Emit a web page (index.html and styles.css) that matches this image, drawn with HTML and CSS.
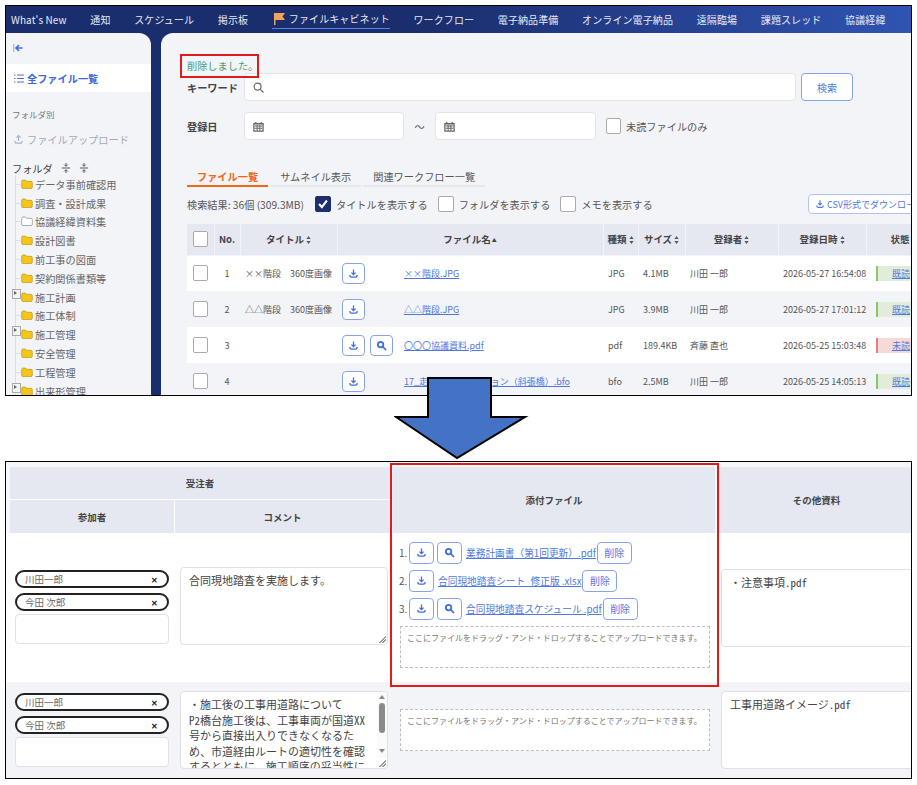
FILE: index.html
```html
<!DOCTYPE html>
<html lang="ja">
<head>
    <meta charset="UTF-8">
    <meta name="viewport" content="width=device-width, initial-scale=1.0">
    <title>ファイルキャビネット</title>
    <link rel="stylesheet" href="styles.css">
</head>
<body>
    <!-- shared icons -->
    <svg class="icon-defs" aria-hidden="true">
        <symbol id="i-download" viewBox="0 0 24 24">
            <path d="M12 3v11M7.500 10l4.500 4.500 4.500-4.500M4 15.500c0 3 1 4.500 3.500 4.500h9c2.500 0 3.500-1.500 3.500-4.500" fill="none" stroke="currentColor" stroke-width="2.800"/>
        </symbol>
        <symbol id="i-search" viewBox="0 0 24 24">
            <circle cx="10" cy="10" r="6" fill="none" stroke="currentColor" stroke-width="4"/>
            <path d="M15 15l6 6" stroke="currentColor" stroke-width="3.600" stroke-linecap="round"/>
        </symbol>
        <symbol id="i-folder" viewBox="0 0 12 11">
            <path d="M.7 2.500c0-1 .5-1.500 1.300-1.500h2.500l1.200 1.300h4.300c.8 0 1.300.5 1.300 1.300v4.600c0 .9-.5 1.300-1.300 1.300H2c-.8 0-1.300-.4-1.300-1.300z"/>
        </symbol>
        <symbol id="i-sort" viewBox="0 0 6 10">
            <path d="M3 0l2.600 3.800H.4zM3 10L.4 6.200h5.200z" fill="currentColor"/>
        </symbol>
        <symbol id="i-fold" viewBox="0 0 12 14">
            <path d="M1 7h10M6 1v3.500M4 3l2 2 2-2M6 13V9.500M4 11l2-2 2 2" fill="none" stroke="currentColor" stroke-width="1.200"/>
        </symbol>
    </svg>

    <section class="frame frame-top">
        <nav class="topnav">
            <a>What's New</a>
            <a>通知</a>
            <a>スケジュール</a>
            <a>掲示板</a>
            <a class="active">
                <svg class="flag" viewBox="0 0 11 12"><path d="M0 0h11L8.500 3.500 11 7H1.500v5H0z" fill="#f0a35c"/></svg>
                ファイルキャビネット
            </a>
            <a>ワークフロー</a>
            <a>電子納品準備</a>
            <a>オンライン電子納品</a>
            <a>遠隔臨場</a>
            <a>課題スレッド</a>
            <a>協議経緯</a>
        </nav>

        <div class="cabinet">
            <aside class="sidebar">
                <svg class="collapse" viewBox="0 0 10 10"><path d="M.8 1v8" stroke="#9aa3b5" stroke-width="1"/><path d="M9.500 5H4M6 2.200L3 5l3 2.800" fill="none" stroke="#3d6fe0" stroke-width="1.600"/></svg>
                <div class="all-files">
                    <svg class="list-icon" viewBox="0 0 10 9"><path d="M0 1h1.500M3 1h7M0 4.500h1.500M3 4.500h7M0 8h1.500M3 8h7" stroke="#4a6fc8" stroke-width="1"/></svg>
                    全ファイル一覧
                </div>
                <div class="side-caption">フォルダ別</div>
                <div class="upload">
                    <svg class="upload-icon" viewBox="0 0 24 24"><path d="M12 15V4M7.500 8L12 3.500 16.500 8M4 14.500c0 4 1 5.500 3.500 5.500h9c2.500 0 3.500-1.500 3.500-5.500" fill="none" stroke="#aab4c8" stroke-width="2.400"/></svg>
                    ファイルアップロード
                </div>
                <div class="folder-head">
                    フォルダ
                    <svg class="fold-icon"><use href="#i-fold"/></svg>
                    <svg class="fold-icon"><use href="#i-fold"/></svg>
                </div>
                <ul class="tree">
                    <li><span class="gutter"></span><svg class="folder"><use href="#i-folder"/></svg>データ事前確認用</li>
                    <li><span class="gutter"></span><svg class="folder"><use href="#i-folder"/></svg>調査・設計成果</li>
                    <li><span class="gutter"></span><svg class="folder empty"><use href="#i-folder"/></svg>協議経緯資料集</li>
                    <li><span class="gutter"></span><svg class="folder"><use href="#i-folder"/></svg>設計図書</li>
                    <li><span class="gutter"></span><svg class="folder"><use href="#i-folder"/></svg>前工事の図面</li>
                    <li><span class="gutter"></span><svg class="folder"><use href="#i-folder"/></svg>契約関係書類等</li>
                    <li><span class="gutter closed"></span><svg class="folder"><use href="#i-folder"/></svg>施工計画</li>
                    <li><span class="gutter"></span><svg class="folder"><use href="#i-folder"/></svg>施工体制</li>
                    <li><span class="gutter closed"></span><svg class="folder"><use href="#i-folder"/></svg>施工管理</li>
                    <li><span class="gutter"></span><svg class="folder"><use href="#i-folder"/></svg>安全管理</li>
                    <li><span class="gutter"></span><svg class="folder"><use href="#i-folder"/></svg>工程管理</li>
                    <li><span class="gutter closed"></span><svg class="folder"><use href="#i-folder"/></svg>出来形管理</li>
                </ul>
            </aside>

            <main class="content">
                <p class="message">削除しました。</p>
                <div class="form-row">
                    <label class="form-label">キーワード</label>
                    <div class="input keyword">
                        <svg class="field-icon" viewBox="0 0 12 12"><circle cx="5" cy="5" r="3.800" fill="none" stroke="#666" stroke-width="1.300"/><path d="M8 8l3.500 3.500" stroke="#666" stroke-width="1.300"/></svg>
                    </div>
                    <button class="btn search-btn">検索</button>
                </div>
                <div class="form-row date-row">
                    <label class="form-label">登録日</label>
                    <div class="input date">
                        <svg class="field-icon" viewBox="0 0 12 12"><path d="M1 3h10v8H1zM3 1v2M9 1v2" fill="none" stroke="#666" stroke-width="1.400"/><path d="M2 5.500h8M2 8h8M4.500 4v6.500M7.500 4v6.500" stroke="#666" stroke-width="1.100"/></svg>
                    </div>
                    <span class="tilde">～</span>
                    <div class="input date second">
                        <svg class="field-icon" viewBox="0 0 12 12"><path d="M1 3h10v8H1zM3 1v2M9 1v2" fill="none" stroke="#666" stroke-width="1.400"/><path d="M2 5.500h8M2 8h8M4.500 4v6.500M7.500 4v6.500" stroke="#666" stroke-width="1.100"/></svg>
                    </div>
                    <span class="check unread-check"></span>
                    <span class="check-text">未読ファイルのみ</span>
                </div>

                <div class="tabs">
                    <a class="tab current">ファイル一覧</a>
                    <a class="tab">サムネイル表示</a>
                    <a class="tab">関連ワークフロー一覧</a>
                </div>

                <div class="result-row">
                    <span class="result-count">検索結果: 36個 (309.3MB)</span>
                    <span class="check on"><svg viewBox="0 0 16 16"><path d="M3.500 8l3.200 3.500L12.500 4" fill="none" stroke="#fff" stroke-width="2.400"/></svg></span>
                    <span class="check-text">タイトルを表示する</span>
                    <span class="check"></span>
                    <span class="check-text">フォルダを表示する</span>
                    <span class="check"></span>
                    <span class="check-text">メモを表示する</span>
                    <button class="btn csv-btn"><svg class="btn-icon"><use href="#i-download"/></svg>CSV形式でダウンロード</button>
                </div>

                <table class="file-table">
                    <colgroup>
                        <col class="c-check"><col class="c-no"><col class="c-title"><col class="c-file"><col class="c-type"><col class="c-size"><col class="c-user"><col class="c-date"><col class="c-state">
                    </colgroup>
                    <thead>
                        <tr>
                            <th><span class="check"></span></th>
                            <th>No.</th>
                            <th>タイトル<svg class="sort"><use href="#i-sort"/></svg></th>
                            <th>ファイル名<span class="sort-up">▲</span></th>
                            <th>種類<svg class="sort"><use href="#i-sort"/></svg></th>
                            <th>サイズ<svg class="sort"><use href="#i-sort"/></svg></th>
                            <th>登録者<svg class="sort"><use href="#i-sort"/></svg></th>
                            <th>登録日時<svg class="sort"><use href="#i-sort"/></svg></th>
                            <th>状態</th>
                        </tr>
                    </thead>
                    <tbody>
                        <tr>
                            <td><span class="check"></span></td>
                            <td class="center">1</td>
                            <td>××階段　360度画像</td>
                            <td><div class="file-cell"><div class="file-btns"><button class="icon-btn"><svg><use href="#i-download"/></svg></button></div><a class="link">××階段.JPG</a></div></td>
                            <td>JPG</td>
                            <td>4.1MB</td>
                            <td>川田 一郎</td>
                            <td>2026-05-27 16:54:08</td>
                            <td><span class="state read">既読</span></td>
                        </tr>
                        <tr>
                            <td><span class="check"></span></td>
                            <td class="center">2</td>
                            <td>△△階段　360度画像</td>
                            <td><div class="file-cell"><div class="file-btns"><button class="icon-btn"><svg><use href="#i-download"/></svg></button></div><a class="link">△△階段.JPG</a></div></td>
                            <td>JPG</td>
                            <td>3.9MB</td>
                            <td>川田 一郎</td>
                            <td>2026-05-27 17:01:12</td>
                            <td><span class="state read">既読</span></td>
                        </tr>
                        <tr>
                            <td><span class="check"></span></td>
                            <td class="center">3</td>
                            <td></td>
                            <td><div class="file-cell"><div class="file-btns"><button class="icon-btn"><svg><use href="#i-download"/></svg></button><button class="icon-btn"><svg><use href="#i-search"/></svg></button></div><a class="link">〇〇〇協議資料.pdf</a></div></td>
                            <td>pdf</td>
                            <td>189.4KB</td>
                            <td>斉藤 直也</td>
                            <td>2026-05-25 15:03:48</td>
                            <td><span class="state unread">未読</span></td>
                        </tr>
                        <tr>
                            <td><span class="check"></span></td>
                            <td class="center">4</td>
                            <td></td>
                            <td><div class="file-cell"><div class="file-btns"><button class="icon-btn"><svg><use href="#i-download"/></svg></button></div><a class="link">17_走行シミュレーション（斜張橋）.bfo</a></div></td>
                            <td>bfo</td>
                            <td>2.5MB</td>
                            <td>川田 一郎</td>
                            <td>2026-05-25 14:05:13</td>
                            <td><span class="state read">既読</span></td>
                        </tr>
                    </tbody>
                </table>
                <div class="note-box"></div>
            </main>
        </div>
    </section>

    <svg class="arrow" viewBox="0 0 135 83"><path d="M34 1h63v39h34L63 81 2 40h32z" fill="#4472c4" stroke="#000" stroke-width="2"/></svg>

    <section class="frame frame-bottom">
        <table class="meeting-table">
            <colgroup>
                <col class="m-user"><col class="m-comment"><col class="m-files"><col class="m-other">
            </colgroup>
            <thead>
                <tr>
                    <th colspan="2" class="group">受注者</th>
                    <th rowspan="2" class="files-head">添付ファイル</th>
                    <th rowspan="2">その他資料</th>
                </tr>
                <tr>
                    <th class="group first">参加者</th>
                    <th class="group">コメント</th>
                </tr>
            </thead>
            <tbody>
                <tr class="row-one">
                    <td class="users-cell">
                        <div class="tag">川田一郎<span class="tag-x">✕</span></div>
                        <div class="tag">今田 次郎<span class="tag-x">✕</span></div>
                        <div class="user-input"></div>
                    </td>
                    <td class="comment-cell"><div class="memo">合同現地踏査を実施します。</div></td>
                    <td class="files-cell">
                        <div class="attach"><span class="num">1.</span><button class="icon-btn"><svg><use href="#i-download"/></svg></button><button class="icon-btn"><svg><use href="#i-search"/></svg></button><a class="link">業務計画書（第1回更新）.pdf</a><button class="btn del-btn">削除</button></div>
                        <div class="attach"><span class="num">2.</span><button class="icon-btn"><svg><use href="#i-download"/></svg></button><a class="link">合同現地踏査シート_修正版 .xlsx</a><button class="btn del-btn">削除</button></div>
                        <div class="attach"><span class="num">3.</span><button class="icon-btn"><svg><use href="#i-download"/></svg></button><button class="icon-btn"><svg><use href="#i-search"/></svg></button><a class="link">合同現地踏査スケジュール .pdf</a><button class="btn del-btn">削除</button></div>
                        <div class="dropzone">ここにファイルをドラッグ・アンド・ドロップすることでアップロードできます。</div>
                    </td>
                    <td class="other-cell"><div class="memo">・注意事項.pdf</div></td>
                </tr>
                <tr class="row-two">
                    <td class="users-cell">
                        <div class="tag">川田一郎<span class="tag-x">✕</span></div>
                        <div class="tag">今田 次郎<span class="tag-x">✕</span></div>
                        <div class="user-input"></div>
                    </td>
                    <td class="comment-cell">
                        <div class="memo scrolled">・施工後の工事用道路について<br>P2橋台施工後は、工事車両が国道XX<br>号から直接出入りできなくなるた<br>め、市道経由ルートの適切性を確認<br>するとともに、施工順序の妥当性に
                            <div class="scrollbar"><span class="sb-up"></span><span class="sb-thumb"></span><span class="sb-down"></span></div>
                        </div>
                    </td>
                    <td class="files-cell">
                        <div class="dropzone">ここにファイルをドラッグ・アンド・ドロップすることでアップロードできます。</div>
                    </td>
                    <td class="other-cell"><div class="memo">工事用道路イメージ.pdf</div></td>
                </tr>
            </tbody>
        </table>
        <div class="note-box files-box"></div>
    </section>
</body>
</html>
```

FILE: styles.css
```css
* {
    box-sizing: border-box;
}

body {
    margin: 0;
    height: 785px;
    overflow: hidden;
    position: relative;
    background: #fff;
    font-family: "Noto Sans CJK JP", "Noto Sans", sans-serif;
    font-size: 10.200px;
    color: #555;
}

.icon-defs {
    display: none;
}

.frame {
    position: relative;
    margin: 0 5px;
    width: 907px;
    border: 1px solid #000;
    overflow: hidden;
}

.frame-top {
    margin-top: 5px;
    height: 391px;
}

.frame-bottom {
    margin-top: 65px;
    height: 318px;
    padding-top: 5px;
    background: #f6f7fa;
}

/* top nav */
.topnav {
    display: flex;
    align-items: center;
    gap: 23.700px;
    height: 27px;
    padding-left: 5px;
    background: linear-gradient(90deg, #1a2d6c 0%, #1a2d6c 45%, #3054b2 100%);
}

.topnav a {
    color: #e6eaf5;
    font-size: 10px;
    letter-spacing: 0.1px;
    white-space: nowrap;
    line-height: 18px;
}

.topnav a.active {
    display: flex;
    align-items: center;
    gap: 4px;
    padding: 0 0 0 2px;
    border-bottom: 1px solid #4f7fe8;
}

.flag {
    width: 11px;
    height: 12px;
}

.cabinet {
    display: flex;
    gap: 10px;
    height: 362px;
    background: #1a2d6c;
}

/* sidebar */
.sidebar {
    width: 145px;
    flex: none;
    padding-top: 10px;
    background: #f2f4f8;
    border-top-right-radius: 12px;
    overflow: hidden;
}

.collapse {
    display: block;
    width: 10px;
    height: 10px;
    margin-left: 7px;
}

.all-files {
    display: flex;
    align-items: center;
    gap: 3px;
    height: 28px;
    margin-top: 11px;
    padding-left: 8px;
    background: #fff;
    color: #3f68d8;
    font-weight: 700;
}

.list-icon {
    width: 10px;
    height: 9px;
}

.side-caption {
    margin: 16px 0 0 6px;
    font-size: 8.500px;
    line-height: 12px;
    color: #777;
}

.upload {
    display: flex;
    align-items: center;
    gap: 3px;
    height: 16px;
    margin: 11px 0 0 6px;
    color: #a4a9b3;
}

.upload-icon {
    width: 11px;
    height: 11px;
    margin-left: 1px;
}

.folder-head {
    display: flex;
    align-items: center;
    height: 16px;
    margin: 13px 0 0 6px;
    color: #444;
}

.fold-icon {
    width: 10px;
    height: 12px;
    margin-left: 8px;
    color: #555;
}

.tree {
    list-style: none;
    margin: -1px 0 0;
    padding: 0 0 0 6px;
}

.tree li {
    display: flex;
    align-items: center;
    height: 18.800px;
    white-space: nowrap;
    color: #666;
}

.gutter {
    position: relative;
    width: 9px;
    height: 100%;
    background:
        linear-gradient(#dcdfe5, #dcdfe5) 3px 0 / 1px 100% no-repeat,
        linear-gradient(#dcdfe5, #dcdfe5) 3px 50% / 6px 1px no-repeat;
}

.gutter.closed::after {
    content: "";
    position: absolute;
    left: 0;
    top: 1px;
    width: 7px;
    height: 8px;
    border: 1px solid #aaa;
    background: #f2f4f8;
}

.gutter.closed::before {
    content: "";
    position: absolute;
    z-index: 1;
    left: 2px;
    top: 3px;
    border-left: 3px solid #666;
    border-top: 2px solid transparent;
    border-bottom: 2px solid transparent;
}

.folder {
    width: 12px;
    height: 11px;
    margin-right: 2px;
    fill: #f5c518;
    stroke: #b08d10;
    stroke-width: 0.6;
}

.folder.empty {
    fill: #fff;
    stroke: #777;
}

/* main area */
.content {
    flex: 1;
    min-width: 0;
    padding: 26px 0 0 26px;
    background: #f2f4f8;
    border-top-left-radius: 12px;
    overflow: hidden;
}

.message {
    margin: 0;
    line-height: 14px;
    color: #4a9b75;
}

.form-row {
    display: flex;
    align-items: center;
    height: 28px;
}

.date-row {
    margin-top: 11px;
}

.form-label {
    width: 57px;
    font-weight: 700;
    color: #444;
}

.input {
    display: flex;
    align-items: center;
    height: 28px;
    padding-left: 8px;
    background: #fff;
    border: 1px solid #e2e4e9;
    border-radius: 4px;
}

.keyword {
    width: 552px;
}

.date {
    width: 160px;
}

.date.second {
    width: 161px;
}

.field-icon {
    width: 11px;
    height: 11px;
}

.tilde {
    width: 31px;
    text-align: center;
}

.btn {
    padding: 0;
    background: #fff;
    border: 1px solid #86a4ee;
    border-radius: 4px;
    color: #4f78e0;
    font-family: inherit;
    font-size: 10px;
}

.search-btn {
    width: 52px;
    height: 28px;
    margin-left: 5px;
}

.check {
    display: inline-block;
    flex: none;
    width: 15px;
    height: 16px;
    background: #fff;
    border: 1px solid #aaa;
    border-radius: 2px;
    vertical-align: middle;
}

.check.on {
    background: #1c2f6e;
    border-color: #1c2f6e;
}

.check.on svg {
    display: block;
    width: 100%;
    height: 100%;
}

.unread-check {
    margin-left: 10px;
}

.check-text {
    margin-left: 5px;
    white-space: nowrap;
}

.tabs {
    display: flex;
    gap: 2px;
    margin-top: 29px;
}

.tab {
    padding: 0 10px;
    line-height: 16px;
    border-bottom: 2px solid #e8e9ec;
    white-space: nowrap;
}

.tab.current {
    color: #f0651a;
    font-weight: 700;
    border-bottom-color: #f0651a;
}

.result-row {
    display: flex;
    align-items: center;
    width: 741px;
    height: 20px;
    margin-top: 7px;
}

.result-count {
    margin-right: 6px;
}

.result-row .check {
    margin-left: 5px;
    width: 16px;
}

.result-row .check-text + .check {
    margin-left: 10px;
}

.csv-btn {
    display: flex;
    align-items: center;
    gap: 2px;
    flex: none;
    width: 120px;
    height: 20px;
    margin-left: auto;
    padding-left: 6px;
    font-size: 9px;
    white-space: nowrap;
    border-color: #b0c4f2;
}

.btn-icon {
    width: 10px;
    height: 10px;
}

/* file table */
.file-table {
    table-layout: fixed;
    width: 747px;
    margin-top: 10px;
    border-collapse: collapse;
    font-size: 9px;
}

.c-check { width: 27px; }
.c-no { width: 26px; }
.c-title { width: 97px; }
.c-file { width: 266px; }
.c-type { width: 35px; }
.c-size { width: 47px; }
.c-user { width: 93px; }
.c-date { width: 88px; }
.c-state { width: 68px; }

.file-table th {
    height: 31px;
    padding: 0;
    background: #e5e8f1;
    border-right: 1px solid #f2f4f8;
    border-bottom: 1px solid #f2f4f8;
    color: #444;
    font-size: 9.500px;
    font-weight: 700;
    text-align: center;
    white-space: nowrap;
}

.file-table td {
    height: 36px;
    padding: 0 0 0 5px;
    white-space: nowrap;
    overflow: hidden;
}

.file-table .center {
    padding: 0;
    text-align: center;
}

.file-table tbody tr:nth-child(odd) {
    background: #fff;
}

.file-table th:first-child .check,
.file-table td:first-child .check {
    margin-left: 1px;
}

.sort {
    width: 5px;
    height: 8px;
    margin-left: 2px;
    color: #555;
    vertical-align: -1px;
}

.sort-up {
    font-size: 5px;
    margin-left: 1px;
    vertical-align: 1px;
}

.file-cell {
    display: flex;
    align-items: center;
}

.file-btns {
    display: flex;
    gap: 5px;
    width: 62px;
}

.icon-btn {
    display: inline-flex;
    align-items: center;
    justify-content: center;
    flex: none;
    width: 23px;
    height: 21px;
    padding: 0;
    background: #fff;
    border: 1px solid #86a4ee;
    border-radius: 4px;
    color: #3f6fe0;
}

.icon-btn svg {
    width: 11px;
    height: 11px;
}

.link {
    color: #4f78e0;
    text-decoration: underline;
    white-space: nowrap;
}

.state {
    display: block;
    width: 48px;
    margin-left: 5px;
    line-height: 15px;
    text-align: center;
    color: #4f78e0;
    text-decoration: underline;
}

.state.read {
    background: #e1ecd9;
    border-left: 2px solid #8ac66a;
}

.state.unread {
    background: #f6d9d9;
    border-left: 2px solid #e58080;
}

/* red annotation boxes */
.note-box {
    position: absolute;
    left: 174px;
    top: 48px;
    width: 79px;
    height: 24px;
    border: 2px solid #e01b1b;
}

.note-box.files-box {
    left: 384px;
    top: 1px;
    width: 329px;
    height: 224px;
}

.arrow {
    position: absolute;
    left: 394px;
    top: 377px;
    width: 135px;
    height: 83px;
}

/* meeting table */
.meeting-table {
    table-layout: fixed;
    width: 908px;
    border-collapse: separate;
    border-spacing: 0;
    font-size: 9px;
}

.m-user { width: 169px; }
.m-comment { width: 215px; }
.m-files { width: 329px; }
.m-other { width: 195px; }

.meeting-table th {
    height: 33px;
    padding: 0;
    background: #e5e8f1;
    color: #444;
    font-size: 9.500px;
    font-weight: 700;
    text-align: center;
}

.meeting-table thead tr:first-child th.group {
    border-left: 4px solid #f6f7fa;
    border-bottom: 1px solid #fff;
}

.meeting-table thead tr + tr th.first {
    border-left: 4px solid #f6f7fa;
    border-right: 1px solid #fff;
}

.meeting-table .files-head {
    border-left: 3px solid #f6f7fa;
    border-right: 4px solid #f6f7fa;
}

.row-one td {
    height: 149px;
    background: #fff;
}

.row-two td {
    height: 96px;
    background: #f2f4f8;
}

.meeting-table td {
    padding: 0;
    vertical-align: middle;
}

.users-cell {
    padding-left: 9px !important;
    padding-right: 6px !important;
}

.row-one .users-cell {
    padding-bottom: 1px !important;
}

.tag {
    display: flex;
    align-items: center;
    justify-content: space-between;
    height: 18px;
    margin-bottom: 5px;
    padding: 0 9px 0 8px;
    background: #fff;
    border: 2px solid #222;
    border-radius: 9px;
    font-size: 9.500px;
    color: #666;
}

.tag + .tag {
    margin-bottom: 3px;
}

.tag-x {
    font-size: 8px;
    font-weight: 700;
    color: #222;
}

.user-input {
    height: 30px;
    background: #fff;
    border: 1px solid #dfe1e6;
    border-radius: 4px;
}

.comment-cell {
    padding: 0 2px 0 5px !important;
}

.row-one .comment-cell {
    padding-bottom: 3px !important;
}

.other-cell {
    padding-left: 2px !important;
}

.memo {
    position: relative;
    height: 78px;
    padding: 5px 8px;
    background: #fff;
    border: 1px solid #dfe1e6;
    border-radius: 4px;
    overflow: hidden;
    font-size: 11px;
    line-height: 15.500px;
    color: #444;
    font-feature-settings: "hwid";
}

.memo::after {
    content: "";
    position: absolute;
    right: 1px;
    bottom: 1px;
    width: 8px;
    height: 8px;
    background: linear-gradient(135deg, transparent 55%, #999 55%, #999 63%, transparent 63%, transparent 75%, #999 75%, #999 83%, transparent 83%);
}

.other-cell .memo::after {
    display: none;
}

.scrollbar {
    position: absolute;
    top: 0;
    right: 0;
    width: 10px;
    height: 66px;
    background: #fafafa;
}

.sb-up,
.sb-down {
    position: absolute;
    left: 2px;
    width: 0;
    height: 0;
    border-left: 3px solid transparent;
    border-right: 3px solid transparent;
}

.sb-up {
    top: 3px;
    border-bottom: 4px solid #888;
}

.sb-down {
    bottom: 5px;
    border-top: 4px solid #888;
}

.sb-thumb {
    position: absolute;
    left: 2px;
    top: 11px;
    width: 6px;
    height: 30px;
    border-radius: 3px;
    background: #8a8a8a;
}

.files-cell {
    padding: 0 9px 6px 9px !important;
}

.row-two .files-cell {
    padding-bottom: 0 !important;
}

.row-two .files-cell .dropzone,
.row-one .files-cell .dropzone {
    margin-left: 1px;
}

.attach {
    display: flex;
    align-items: center;
    height: 22px;
    margin-bottom: 6px;
    font-size: 10px;
}

.num {
    width: 10px;
    flex: none;
}

.attach .icon-btn {
    width: 25px;
    height: 22px;
    margin-right: 3px;
}

.attach .link {
    margin-left: 1px;
    font-size: 9.700px;
}

.del-btn {
    flex: none;
    width: 35px;
    height: 22px;
    margin-left: 1px;
}

.dropzone {
    height: 42px;
    padding: 5px 6px;
    background: #fff;
    border: 1.500px dashed #bdbdbd;
    font-size: 8px;
    line-height: 12px;
    color: #777;
    white-space: nowrap;
}
```
